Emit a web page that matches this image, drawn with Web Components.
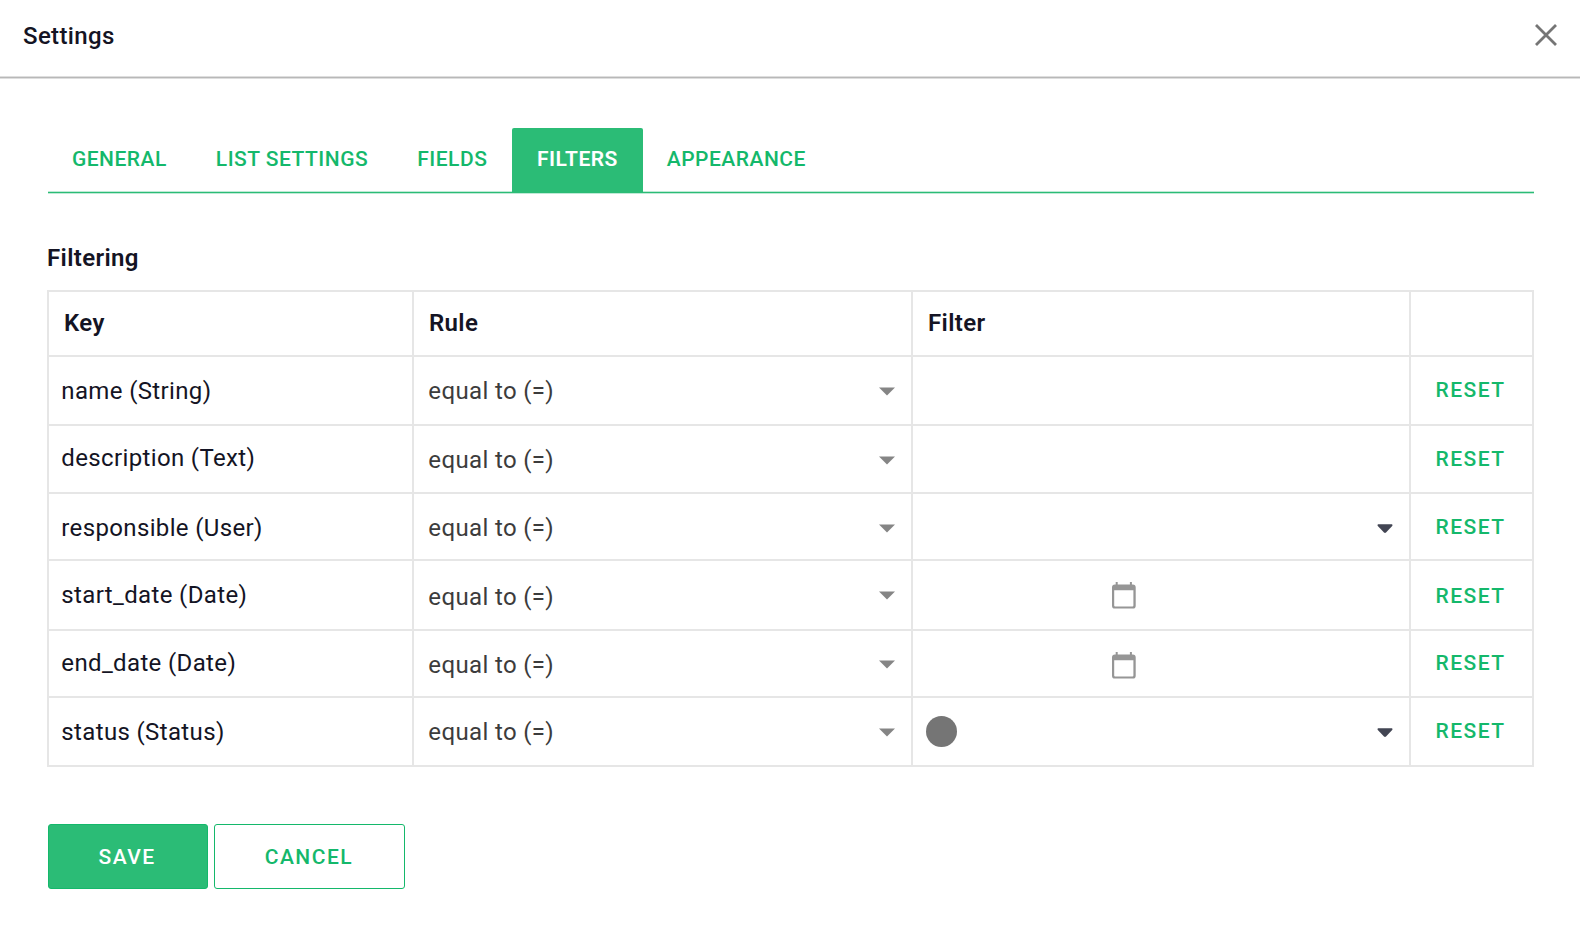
<!DOCTYPE html>
<html lang="en">
<head>
<meta charset="utf-8">
<title>Settings</title>
<style>
  body {
    margin: 0;
    background: #fff;
    color: #141424;
    font: 400 24px/28px Roboto, "Liberation Sans", sans-serif;
    letter-spacing: 0.36px;
    --green: #2bbc76;
    --green-text: #14b86b;
    --line: #e6e6e6;
  }
</style>
</head>
<body>
<settings-dialog heading="Settings">
  <tab-bar>
    <tab-item>GENERAL</tab-item>
    <tab-item>LIST SETTINGS</tab-item>
    <tab-item>FIELDS</tab-item>
    <tab-item active>FILTERS</tab-item>
    <tab-item>APPEARANCE</tab-item>
  </tab-bar>
  <filter-table heading="Filtering"></filter-table>
  <action-button slot="actions" primary>SAVE</action-button>
  <action-button slot="actions">CANCEL</action-button>
</settings-dialog>

<script>
class SettingsDialog extends HTMLElement {
  constructor() {
    super();
    this.attachShadow({ mode: "open" });
    this.shadowRoot.innerHTML = `
    <style>
      :host { display: block; }
      header {
        display: flex;
        justify-content: space-between;
        box-sizing: border-box;
        height: 78px;
        padding: 22px 23px 0;
        border-bottom: 1px solid #b8b8b8;
        box-shadow: 0 1px #dedede, inset 0 -1px #dedede;
      }
      h1 { margin: 0; font-size: 24px; font-weight: 550; letter-spacing: 0.35px; }
      svg { display: block; margin-top: 2px; }
      main { padding: 50px 46px 0 48px; }
      footer { display: flex; gap: 6px; margin-top: 57px; }
    </style>
    <header>
      <h1></h1>
      <svg width="22" height="22" viewBox="0 0 22 22" fill="none" stroke="#757575" stroke-width="2.8">
        <path d="M1 1 L21 21 M21 1 L1 21" />
      </svg>
    </header>
    <main>
      <slot></slot>
      <footer><slot name="actions"></slot></footer>
    </main>
    `;
  }

  connectedCallback() {
    this.shadowRoot.querySelector("h1").textContent = this.getAttribute("heading");
  }
}

class TabBar extends HTMLElement {
  constructor() {
    super();
    this.attachShadow({ mode: "open" });
    this.shadowRoot.innerHTML = `
    <style>
      :host {
        display: flex;
        height: 64px;
        border-bottom: 1px solid var(--green);
        box-shadow: 0 1px #bfead6, inset 0 -1px #bfead6;
      }
    </style>
    <slot></slot>
    `;
  }
}

class TabItem extends HTMLElement {
  constructor() {
    super();
    this.attachShadow({ mode: "open" });
    this.shadowRoot.innerHTML = `
    <style>
      :host {
        display: block;
        padding: 17px 25.1px 0 23.9px;
        color: var(--green-text);
        font-size: 21px;
        font-weight: 550;
        letter-spacing: 0.5px;
        white-space: nowrap;
      }
      :host([active]) {
        padding: 17px 25px 0 24.5px;
        background: var(--green);
        border-radius: 2px 2px 0 0;
        color: #fff;
        font-weight: 650;
      }
    </style>
    <slot></slot>
    `;
  }
}

class ArrowIcon extends HTMLElement {
  constructor() {
    super();
    this.attachShadow({ mode: "open" });
    this.shadowRoot.innerHTML = `
    <style>
      :host { display: block; color: #858585; }
      :host([dark]) { color: #424553; }
      svg { display: block; }
    </style>
    <svg width="16" height="9" viewBox="0 0 16 9" fill="currentColor"></svg>
    `;
  }

  connectedCallback() {
    // the dark variant has rounded corners
    const shape = this.hasAttribute("dark")
      ? '<path d="M1.6 .3h12.8c1 0 1.4 1 .8 1.7L9 8.5c-.6.6-1.4.6-2 0L.8 2C.2 1.3.6.3 1.6.3z" />'
      : '<path d="M0 .4h16L8 8.6z" />';
    this.shadowRoot.querySelector("svg").innerHTML = shape;
  }
}

class CalendarIcon extends HTMLElement {
  constructor() {
    super();
    this.attachShadow({ mode: "open" });
    this.shadowRoot.innerHTML = `
    <style>
      :host, svg { display: block; }
    </style>
    <svg width="24" height="27" viewBox="0 0 24 27">
      <path fill="#969696" fill-rule="evenodd" d="M3.7 0h2v2.4h12.2V0h2v2.4h.9A2.9 2.9 0 0 1 23.7 5.3v18.4a2.9 2.9 0 0 1-2.9 2.9H2.9A2.9 2.9 0 0 1 0 23.7V5.3a2.9 2.9 0 0 1 2.9-2.9h.8zM2.2 8.300v15.200q0 .9.9.9h17.400q.9 0 .9-.9V8.300z" />
    </svg>
    `;
  }
}

class FilterTable extends HTMLElement {
  constructor() {
    super();
    this.attachShadow({ mode: "open" });
    // row height, then the top padding of the key, rule and reset texts
    this._rows = [
      { key: "name (String)", height: 69, pad: [20, 20, 19] },
      { key: "description (Text)", height: 68, pad: [18, 20, 19] },
      { key: "responsible (User)", height: 67, pad: [20, 20, 19], type: "user" },
      { key: "start_date (Date)", height: 70, pad: [20, 22, 21], type: "date" },
      { key: "end_date (Date)", height: 67, pad: [18, 20, 18], type: "date" },
      { key: "status (Status)", height: 69, pad: [20, 20, 19], type: "status" },
    ];
  }

  connectedCallback() {
    this._render();
  }

  _control(type) {
    if (type === "user") return "<i></i><arrow-icon dark></arrow-icon>";
    if (type === "date") return "<calendar-icon></calendar-icon>";
    if (type === "status") return '<i class="dot"></i><arrow-icon dark></arrow-icon>';
    return "";
  }

  _render() {
    const rows = this._rows.map((row) => `
      <div class="row" style="height: ${row.height}px">
        <div class="cell key" style="padding-top: ${row.pad[0]}px">${row.key}</div>
        <div class="cell rule" style="padding-top: ${row.pad[1]}px">
          <span>equal to (=)</span>
          <arrow-icon style="margin-top: ${(row.key.startsWith("end") ? 29 : 30) - row.pad[1]}px"></arrow-icon>
        </div>
        <div class="cell filter ${row.type || ""}">${this._control(row.type)}</div>
        <div class="cell reset" style="padding-top: ${row.pad[2]}px">RESET</div>
      </div>`).join("");

    this.shadowRoot.innerHTML = `
    <style>
      :host { display: block; margin: 50px 0 0 -1px; }
      h2 { margin: 0 0 15.5px; font-size: 24px; line-height: 31.5px; font-weight: 600; }
      .table { border: solid var(--line); border-width: 2px 0 0 2px; }
      .row {
        display: grid;
        grid-template-columns: 365px 499px 498px 1fr;
        box-sizing: border-box;
      }
      .head { height: 65px; font-weight: 600; }
      .head .cell { padding: 17px 15px 0; }
      .cell {
        display: flex;
        align-items: flex-start;
        box-sizing: border-box;
        border: solid var(--line);
        border-width: 0 2px 2px 0;
      }
      .key { padding-left: 12.3px; }
      .rule { justify-content: space-between; padding: 0 16px 0 14.3px; color: #3c3c3c; }
      .filter { justify-content: space-between; padding: 30px 16px 0 13px; }
      .filter.date { padding: 21px 0 0 199px; }
      .filter.status { padding-top: 18px; }
      .filter.status arrow-icon { margin-top: 12px; }
      .dot { width: 31px; height: 31px; border-radius: 50%; background: #757575; }
      .reset {
        padding-left: 24.5px;
        color: var(--green-text);
        font-size: 21px;
        font-weight: 500;
        letter-spacing: 1.45px;
      }
    </style>
    <h2>${this.getAttribute("heading")}</h2>
    <div class="table">
      <div class="row head">
        <div class="cell">Key</div>
        <div class="cell">Rule</div>
        <div class="cell">Filter</div>
        <div class="cell"></div>
      </div>
      ${rows}
    </div>
    `;
  }
}

class ActionButton extends HTMLElement {
  constructor() {
    super();
    this.attachShadow({ mode: "open" });
    this.shadowRoot.innerHTML = `
    <style>
      :host { display: block; }
      button {
        display: block;
        box-sizing: border-box;
        height: 65px;
        margin: 0;
        padding: 0 50.5px 0 50px;
        border: 1px solid var(--green-text);
        border-radius: 3px;
        background: #fff;
        color: var(--green-text);
        font: 500 21px/28px Roboto, "Liberation Sans", sans-serif;
        letter-spacing: 1.5px;
      }
      :host([primary]) button {
        padding: 0 51px 0 49.5px;
        background: var(--green);
        color: #fff;
        font-weight: 550;
      }
    </style>
    <button type="button"><slot></slot></button>
    `;
  }
}

customElements.define("arrow-icon", ArrowIcon);
customElements.define("calendar-icon", CalendarIcon);
customElements.define("tab-item", TabItem);
customElements.define("tab-bar", TabBar);
customElements.define("filter-table", FilterTable);
customElements.define("action-button", ActionButton);
customElements.define("settings-dialog", SettingsDialog);
</script>
</body>
</html>
